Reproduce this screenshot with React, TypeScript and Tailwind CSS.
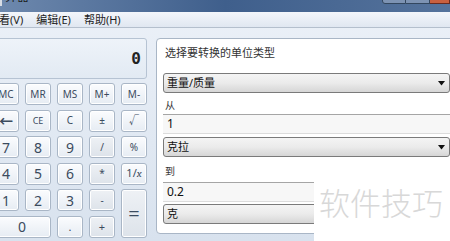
import React from "react";

const keys: { label: string; op?: boolean; cls?: string; text?: string }[] = [
  { label: "MC", text: "text-[10px]" },
  { label: "MR", text: "text-[10px]" },
  { label: "MS", text: "text-[10px]" },
  { label: "M+", text: "text-[10px]" },
  { label: "M-", text: "text-[10px]" },
  { label: "←", text: "text-[14px] font-bold" },
  { label: "CE", text: "text-[9px]" },
  { label: "C", text: "text-[10px]" },
  { label: "±", text: "text-[10px]" },
  { label: "√", text: "text-[10px]" },
  { label: "7" },
  { label: "8" },
  { label: "9" },
  { label: "/", op: true, text: "text-[10px]" },
  { label: "%", text: "text-[10px]" },
  { label: "4" },
  { label: "5" },
  { label: "6" },
  { label: "*", op: true, text: "text-[10px]" },
  { label: "1/x", text: "text-[11px]" },
  { label: "1" },
  { label: "2" },
  { label: "3" },
  { label: "-", op: true, text: "text-[10px]" },
  { label: "=", op: true, cls: "row-span-2", text: "text-[20px]" },
  { label: "0", cls: "col-span-2" },
  { label: ".", text: "text-[11px]" },
  { label: "+", op: true, text: "text-[11px]" },
];

function Key({ k }: { k: (typeof keys)[number] }) {
  const bg = k.op
    ? "bg-gradient-to-b from-[#eef1f5] to-[#dde3ea]"
    : "bg-gradient-to-b from-[#fbfcfe] to-[#e6ecf3]";
  return (
    <div
      className={`${k.cls ?? ""} ${bg} flex items-center justify-center rounded-[3px] border border-[#a9b6c6] shadow-[inset_0_0_0_1px_#ffffff] text-[#3b4b5e] ${k.text ?? "text-[14px]"}`}
    >
      {k.label === "1/x" ? (
        <span>
          1/<i className="font-serif">x</i>
        </span>
      ) : (
        k.label
      )}
    </div>
  );
}

function Select({ value }: { value: string }) {
  return (
    <div className="h-[20px] w-[287px] rounded-[3px] border border-[#7a7a7a] bg-gradient-to-b from-[#f4f4f4] via-[#ebebeb] to-[#d6d6d6] flex items-center justify-between pl-[3px] pr-[4px] text-[11px] text-[#111]">
      <span>{value}</span>
      <svg width="7" height="5" viewBox="0 0 7 5">
        <path d="M0 0h7L3.5 4.5z" fill="#111" />
      </svg>
    </div>
  );
}

function Input({ value }: { value: string }) {
  return (
    <div className="h-[20px] w-[287px] border-t border-t-[#a5a5a5] border-b border-b-[#dcdcdc] bg-[#f7f7f7] flex items-center pl-[4px] text-[12px] text-[#111]">
      {value}
    </div>
  );
}

export default function App() {
  return (
    <div
      className="relative w-[450px] h-[241px] overflow-hidden bg-gradient-to-b from-[#ecf1f8] to-[#d8e2ee]"
      style={{ fontFamily: '"Noto Sans", "Noto Sans CJK SC", sans-serif' }}
    >
      {/* title bar */}
      <div className="relative h-[12px] overflow-hidden bg-gradient-to-r from-[#6d88ad] via-[#3f5f8c] to-[#55739c]">
        <div className="absolute left-0 top-[-12px] flex items-end gap-[3px] text-[12px] text-[#1b1b1b]">
          <span className="w-[2px] h-[13px] bg-[#d8dde5]"></span>
          <span>算器</span>
        </div>
        <div className="absolute right-0 top-[-4px] flex">
          <div className="w-[24px] h-[8px] border border-[#33475f] rounded-bl-[3px] bg-[#7d93b3]"></div>
          <div className="w-[24px] h-[8px] border border-l-0 border-[#33475f] bg-[#7d93b3]"></div>
          <div className="w-[20px] h-[8px] border border-l-0 border-[#6a2b1f] bg-[#c9603f]"></div>
        </div>
      </div>

      {/* menu bar */}
      <div className="h-[16px] pt-[2px] bg-gradient-to-b from-[#f3f6fb] to-[#e0e7f1] border-b border-[#b4bfcd] flex items-center text-[11px] text-[#1e1e1e]">
        <span className="ml-[-1px]">看(V)</span>
        <span className="ml-[13px]">编辑(E)</span>
        <span className="ml-[13px]">帮助(H)</span>
      </div>

      <div className="flex pt-[10px]">
        {/* calculator */}
        <div className="ml-[-7px] w-[156px] flex flex-col">
          <div className="h-[41px] rounded-[3px] border border-[#b6c3d3] bg-gradient-to-b from-[#eef3f9] to-[#e2eaf3] flex items-center justify-end pr-[5px]">
            <span
              className="text-[16px] font-bold text-[#222]"
              style={{ fontFamily: '"DejaVu Sans Mono", monospace' }}
            >
              0
            </span>
          </div>
          <div className="mt-[4px] grid grid-cols-[repeat(5,26px)] auto-rows-[22px] gap-x-[6px] gap-y-[4.6px]">
            {keys.map((k) => (
              <Key key={k.label} k={k} />
            ))}
          </div>
        </div>

        {/* unit converter panel */}
        <div className="ml-[9px] w-[300px] h-[196px] rounded-l-[4px] border border-[#a9b6c6] bg-white pt-[7px] pl-[6px] text-[#222]">
          <div className="h-[14px] leading-[14px] text-[11px] pl-[2px] text-[#333]">选择要转换的单位类型</div>
          <div className="mt-[13px]">
            <Select value="重量/质量" />
          </div>
          <div className="mt-[5px] h-[14px] leading-[14px] text-[10px] pl-[2px] text-[#333]">从</div>
          <div className="mt-[2px]">
            <Input value="1" />
          </div>
          <div className="mt-[3px]">
            <Select value="克拉" />
          </div>
          <div className="mt-[7px] h-[14px] leading-[14px] text-[10px] pl-[2px] text-[#333]">到</div>
          <div className="mt-[4px]">
            <Input value="0.2" />
          </div>
          <div className="mt-[2px]">
            <Select value="克" />
          </div>
        </div>
      </div>

      {/* watermark */}
      <div className="absolute left-[314px] top-[160px] w-[136px] h-[81px] bg-white flex items-start">
        <span className="mt-[25px] ml-[5px] text-[31px] leading-[36px] font-light text-[#d8d8d8] tracking-[0px]">
          软件技巧
        </span>
      </div>
    </div>
  );
}
